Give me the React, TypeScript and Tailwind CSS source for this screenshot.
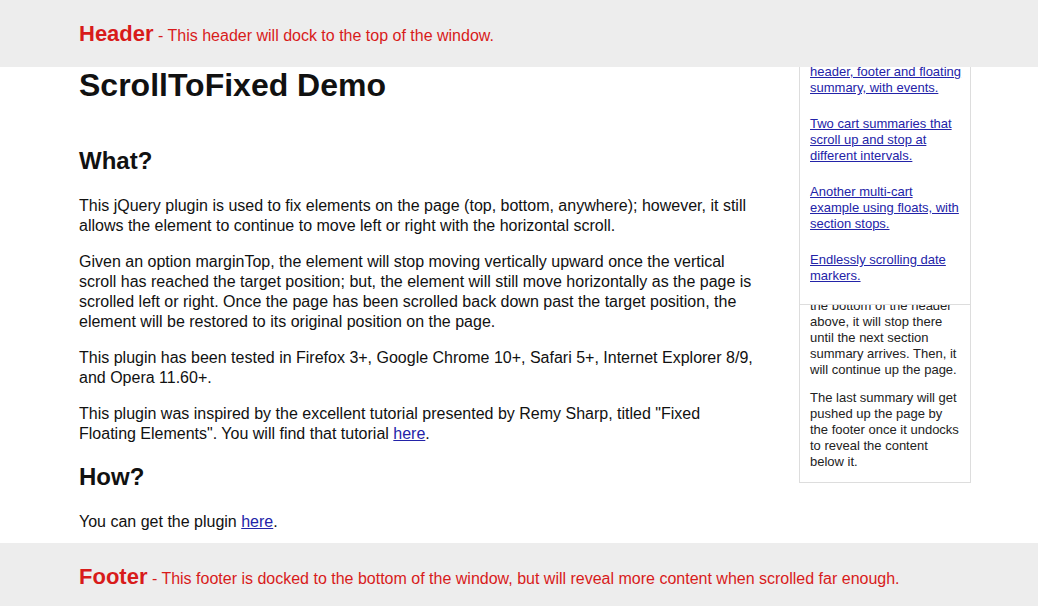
import React from 'react';

const linkCls = 'text-[#2323a8] underline';

const SideLink: React.FC<{ lines: string[] }> = ({ lines }) => (
  <a href="#" className={`${linkCls} block mb-[20px] whitespace-nowrap`}>
    {lines.map((l, i) => (
      <React.Fragment key={i}>
        {l}
        {i < lines.length - 1 && <br />}
      </React.Fragment>
    ))}
  </a>
);

const Lines: React.FC<{ lines: string[]; className?: string }> = ({ lines, className }) => (
  <p className={`whitespace-nowrap ${className ?? ''}`}>
    {lines.map((l, i) => (
      <React.Fragment key={i}>
        {l}
        {i < lines.length - 1 && <br />}
      </React.Fragment>
    ))}
  </p>
);

const App: React.FC = () => {
  return (
    <div
      className="h-[606px] w-full overflow-hidden flex flex-col bg-white text-[#111]"
      style={{ fontFamily: '"Liberation Sans", Arial, sans-serif' }}
    >
      {/* docked header */}
      <header className="h-[67px] shrink-0 bg-[#ededed] flex items-center pl-[79px] text-[#d81b1b]">
        <p className="text-[16px]">
          <span className="text-[22px] font-bold">Header</span> - This header will dock to the top of the window.
        </p>
      </header>

      <div className="h-[476px] shrink-0 overflow-hidden flex pl-[79px]">
        <main className="w-[680px] shrink-0 text-[16px] leading-[20px]">
          <h1 className="text-[32px] leading-[37px] font-bold mb-[43px]">ScrollToFixed Demo</h1>
          <h2 className="text-[24px] leading-[28px] font-bold mb-[21px]">What?</h2>
          <p className="mb-4">
            This jQuery plugin is used to fix elements on the page (top, bottom, anywhere); however, it still allows the
            element to continue to move left or right with the horizontal scroll.
          </p>
          <p className="mb-4">
            Given an option marginTop, the element will stop moving vertically upward once the vertical scroll has
            reached the target position; but, the element will still move horizontally as the page is scrolled left or
            right. Once the page has been scrolled back down past the target position, the element will be restored to
            its original position on the page.
          </p>
          <p className="mb-4">
            This plugin has been tested in Firefox 3+, Google Chrome 10+, Safari 5+, Internet Explorer 8/9, and Opera
            11.60+.
          </p>
          <p className="mb-[19px]">
            This plugin was inspired by the excellent tutorial presented by Remy Sharp, titled "Fixed Floating
            Elements". You will find that tutorial{' '}
            <a href="#" className={linkCls}>
              here
            </a>
            .
          </p>
          <h2 className="text-[24px] leading-[28px] font-bold mb-[21px]">How?</h2>
          <p>
            You can get the plugin{' '}
            <a href="#" className={linkCls}>
              here
            </a>
            .
          </p>
        </main>

        <aside className="w-[172px] shrink-0 ml-[40px] text-[13px] leading-[16px]">
          {/* floating summary, docked under the header */}
          <div className="relative z-10 -mt-[20px] bg-white border border-[#dddddd] px-[10px]">
            <SideLink lines={['Full demo with a docked', 'header, footer and floating', 'summary, with events.']} />
            <SideLink lines={['Two cart summaries that', 'scroll up and stop at', 'different intervals.']} />
            <SideLink lines={['Another multi-cart', 'example using floats, with', 'section stops.']} />
            <SideLink lines={['Endlessly scrolling date', 'markers.']} />
          </div>
          <div className="-mt-[50px] bg-white border border-[#dddddd] px-[10px] pt-[10px] text-[#222]">
            <Lines
              className="mb-[12px]"
              lines={[
                'Each summary scrolls up',
                'the page. When it reaches',
                'the bottom of the header',
                'above, it will stop there',
                'until the next section',
                'summary arrives. Then, it',
                'will continue up the page.',
              ]}
            />
            <Lines
              className="mb-[12px]"
              lines={[
                'The last summary will get',
                'pushed up the page by',
                'the footer once it undocks',
                'to reveal the content',
                'below it.',
              ]}
            />
          </div>
        </aside>
      </div>

      {/* docked footer */}
      <footer className="h-[67px] shrink-0 bg-[#ededed] flex items-center pl-[79px] text-[#d81b1b]">
        <p className="text-[16px]">
          <span className="text-[22px] font-bold">Footer</span> - This footer is docked to the bottom of the window, but
          will reveal more content when scrolled far enough.
        </p>
      </footer>
    </div>
  );
};

export default App;
